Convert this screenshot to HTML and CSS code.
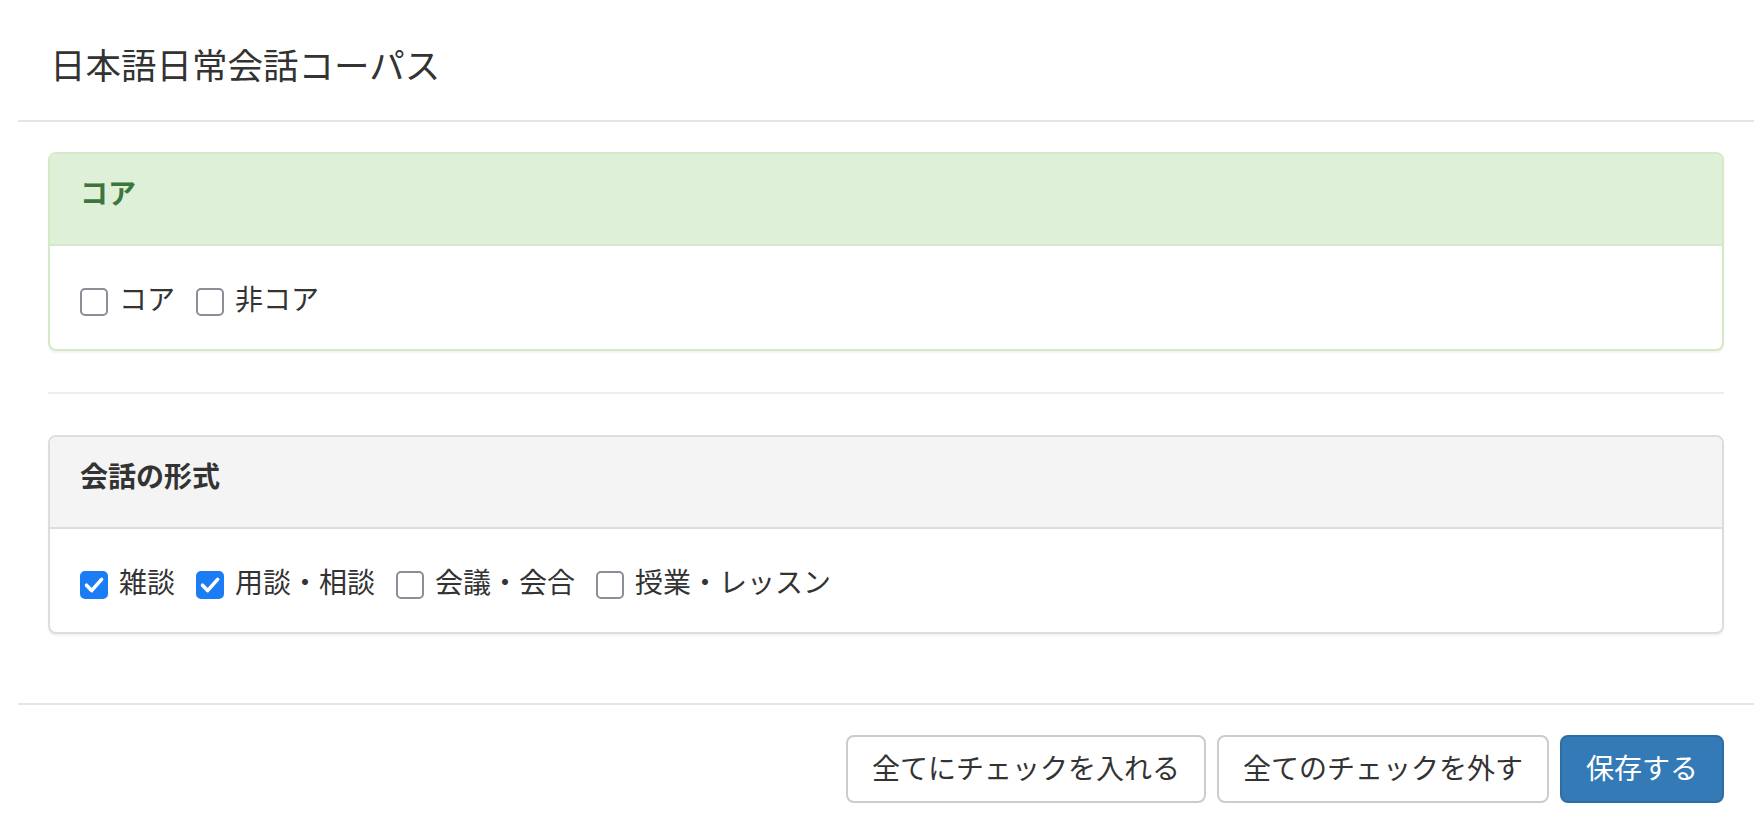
FILE: index.html
```html
<!DOCTYPE html>
<html lang="ja">
<head>
<meta charset="utf-8">
<title>日本語日常会話コーパス</title>
<link rel="stylesheet" href="styles.css">
</head>
<body>
<div class="modal">
  <div class="modal-header">
    <h4 class="modal-title">日本語日常会話コーパス</h4>
  </div>
  <div class="modal-body">
    <div class="panel panel-success">
      <div class="panel-heading">コア</div>
      <div class="panel-body">
        <div class="options">
          <label class="opt"><span class="cb"></span><span class="txt">コア</span></label>
          <label class="opt"><span class="cb"></span><span class="txt">非コア</span></label>
        </div>
      </div>
    </div>
    <hr class="sep">
    <div class="panel panel-default">
      <div class="panel-heading">会話の形式</div>
      <div class="panel-body">
        <div class="options">
          <label class="opt"><span class="cb on"><svg viewBox="0 0 28 28" width="28" height="28"><polyline points="6.5,14.2 11.6,19.6 21.6,8.4" fill="none" stroke="#fff" stroke-width="3.6" stroke-linecap="round" stroke-linejoin="round"/></svg></span><span class="txt">雑談</span></label>
          <label class="opt"><span class="cb on"><svg viewBox="0 0 28 28" width="28" height="28"><polyline points="6.5,14.2 11.6,19.6 21.6,8.4" fill="none" stroke="#fff" stroke-width="3.6" stroke-linecap="round" stroke-linejoin="round"/></svg></span><span class="txt">用談・相談</span></label>
          <label class="opt"><span class="cb"></span><span class="txt">会議・会合</span></label>
          <label class="opt"><span class="cb"></span><span class="txt">授業・レッスン</span></label>
        </div>
      </div>
    </div>
  </div>
  <div class="modal-footer">
    <button class="btn btn-default">全てにチェックを入れる</button>
    <button class="btn btn-default">全てのチェックを外す</button>
    <button class="btn btn-primary">保存する</button>
  </div>
</div>
</body>
</html>
```
FILE: styles.css
```css
html, body {
  margin: 0;
  background: #fff;
}
body {
  font-family: "Noto Sans CJK JP", "Noto Sans", sans-serif;
  color: #333;
}
.modal {
  margin: 0 6px 0 18px;
}
.modal-header {
  padding: 46px 30px 38px 32px;
  border-bottom: 2px solid #e5e5e5;
}
.modal-title {
  margin: 0;
  font-size: 35.5px;
  line-height: 36px;
  font-weight: 400;
  color: #333;
}
.modal-body {
  padding: 30px 30px 69px 30px;
}
.panel {
  border: 2px solid #ddd;
  border-radius: 8px;
  background: #fff;
  box-shadow: 0 2px 2px rgba(0, 0, 0, 0.05);
  overflow: hidden;
}
.panel-heading {
  padding: 24px 30px 38px;
  font-size: 28px;
  line-height: 28px;
  font-weight: 700;
  border-bottom: 2px solid #ddd;
}
.panel-default .panel-heading {
  background: #f4f4f4;
  color: #333;
}
.panel-success {
  border-color: #d6e9c6;
}
.panel-success .panel-heading {
  background: #dff0d8;
  color: #3c763d;
  border-bottom-color: #d6e9c6;
}
.panel-body {
  padding: 38px 30px 33px;
}
.options {
  display: flex;
  gap: 21px;
}
.opt {
  display: flex;
  align-items: flex-start;
  gap: 11px;
  font-size: 28px;
  line-height: 28px;
  color: #333;
}
.cb {
  flex: none;
  width: 28px;
  height: 28px;
  box-sizing: border-box;
  margin-top: 4px;
  border: 2px solid #8e8d97;
  border-radius: 5px;
  background: #fff;
  position: relative;
}
.cb.on {
  background: #1b7cf3;
  border-color: #1b7cf3;
}
.cb svg {
  position: absolute;
  left: -2px;
  top: -2px;
  display: block;
}
.sep {
  margin: 41px 0;
  border: 0;
  border-top: 2px solid #eee;
  height: 0;
}
.modal-footer {
  display: flex;
  justify-content: flex-end;
  gap: 11px;
  padding: 30px 30px;
  border-top: 2px solid #e5e5e5;
}
.btn {
  font-family: "Noto Sans CJK JP", "Noto Sans", sans-serif;
  font-size: 28px;
  line-height: 40px;
  padding: 10px 24px 14px;
  border: 2px solid #ccc;
  border-radius: 8px;
  background: #fff;
  color: #333;
  margin: 0;
  white-space: nowrap;
}
.btn-primary {
  background: #337ab7;
  border-color: #2e6da4;
  color: #fff;
}
```
